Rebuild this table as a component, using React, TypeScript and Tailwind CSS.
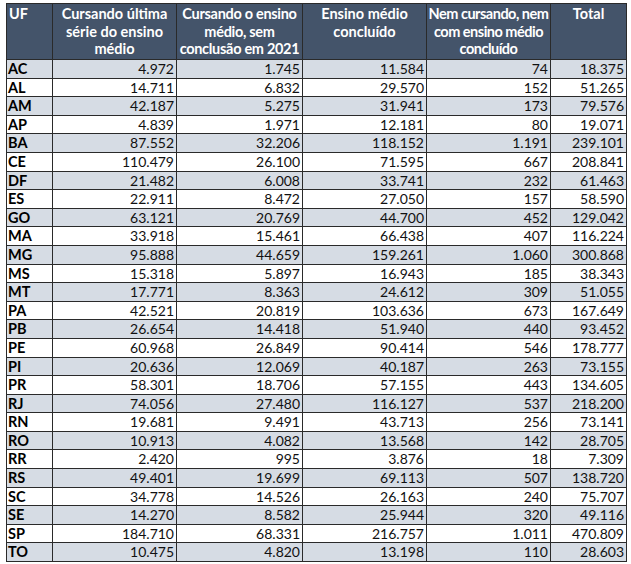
import React from "react";

const rows: [string, string, string, string, string, string][] = [
  ["AC", "4.972", "1.745", "11.584", "74", "18.375"],
  ["AL", "14.711", "6.832", "29.570", "152", "51.265"],
  ["AM", "42.187", "5.275", "31.941", "173", "79.576"],
  ["AP", "4.839", "1.971", "12.181", "80", "19.071"],
  ["BA", "87.552", "32.206", "118.152", "1.191", "239.101"],
  ["CE", "110.479", "26.100", "71.595", "667", "208.841"],
  ["DF", "21.482", "6.008", "33.741", "232", "61.463"],
  ["ES", "22.911", "8.472", "27.050", "157", "58.590"],
  ["GO", "63.121", "20.769", "44.700", "452", "129.042"],
  ["MA", "33.918", "15.461", "66.438", "407", "116.224"],
  ["MG", "95.888", "44.659", "159.261", "1.060", "300.868"],
  ["MS", "15.318", "5.897", "16.943", "185", "38.343"],
  ["MT", "17.771", "8.363", "24.612", "309", "51.055"],
  ["PA", "42.521", "20.819", "103.636", "673", "167.649"],
  ["PB", "26.654", "14.418", "51.940", "440", "93.452"],
  ["PE", "60.968", "26.849", "90.414", "546", "178.777"],
  ["PI", "20.636", "12.069", "40.187", "263", "73.155"],
  ["PR", "58.301", "18.706", "57.155", "443", "134.605"],
  ["RJ", "74.056", "27.480", "116.127", "537", "218.200"],
  ["RN", "19.681", "9.491", "43.713", "256", "73.141"],
  ["RO", "10.913", "4.082", "13.568", "142", "28.705"],
  ["RR", "2.420", "995", "3.876", "18", "7.309"],
  ["RS", "49.401", "19.699", "69.113", "507", "138.720"],
  ["SC", "34.778", "14.526", "26.163", "240", "75.707"],
  ["SE", "14.270", "8.582", "25.944", "320", "49.116"],
  ["SP", "184.710", "68.331", "216.757", "1.011", "470.809"],
  ["TO", "10.475", "4.820", "13.198", "110", "28.603"],
];

const font = { fontFamily: "Lato, 'Open Sans', sans-serif" };

export default function App() {
  return (
    <div className="w-[631px] h-[564px] bg-white pt-[3px] pl-[6px]" style={font}>
      <div className="w-[621px] border border-[#2a2a2a] grid grid-cols-[46px_124px_126px_124px_124px_75px]">
        <div className="bg-[#44546a] h-[55px] text-white font-bold text-[14.5px] leading-[17.5px] pl-[2px] pt-[1px] border-r border-[#2a2a2a]">
          UF
        </div>
        <div className="bg-[#44546a] h-[55px] text-white font-bold text-[14.5px] leading-[17.5px] text-center px-[8px] pt-[1px] border-r border-[#2a2a2a]">
          Cursando última série do ensino médio
        </div>
        <div className="bg-[#44546a] h-[55px] text-white font-bold text-[14.5px] leading-[17.5px] text-center px-[2px] pt-[1px] border-r border-[#2a2a2a] tracking-[-0.3px]">
          Cursando o ensino médio, sem conclusão em 2021
        </div>
        <div className="bg-[#44546a] h-[55px] text-white font-bold text-[14.5px] leading-[17.5px] text-center px-[14px] pt-[1px] border-r border-[#2a2a2a]">
          Ensino médio concluído
        </div>
        <div className="bg-[#44546a] h-[55px] text-white font-bold text-[14.5px] leading-[17.5px] text-center pt-[1px] border-r border-[#2a2a2a] tracking-[-0.5px] whitespace-nowrap">
          Nem cursando, nem
          <br />
          com ensino médio
          <br />
          concluído
        </div>
        <div className="bg-[#44546a] h-[55px] text-white font-bold text-[14.5px] leading-[17.5px] text-center pt-[1px]">
          Total
        </div>
        {rows.map((r, i) => {
          const bg = i % 2 === 0 ? "bg-[#d6dce4]" : "bg-white";
          return (
            <React.Fragment key={r[0]}>
              <div
                className={`${bg} h-[18.6px] border-t border-r border-[#2a2a2a] font-bold text-[14.5px] leading-[17px] text-black pl-[1px]`}
              >
                {r[0]}
              </div>
              {r.slice(1).map((v, j) => (
                <div
                  key={j}
                  className={`${bg} h-[18.6px] border-t border-[#2a2a2a] text-[14px] leading-[17px] text-[#111] text-right pr-[2px] ${
                    j < 4 ? "border-r" : ""
                  }`}
                >
                  {v}
                </div>
              ))}
            </React.Fragment>
          );
        })}
      </div>
    </div>
  );
}
